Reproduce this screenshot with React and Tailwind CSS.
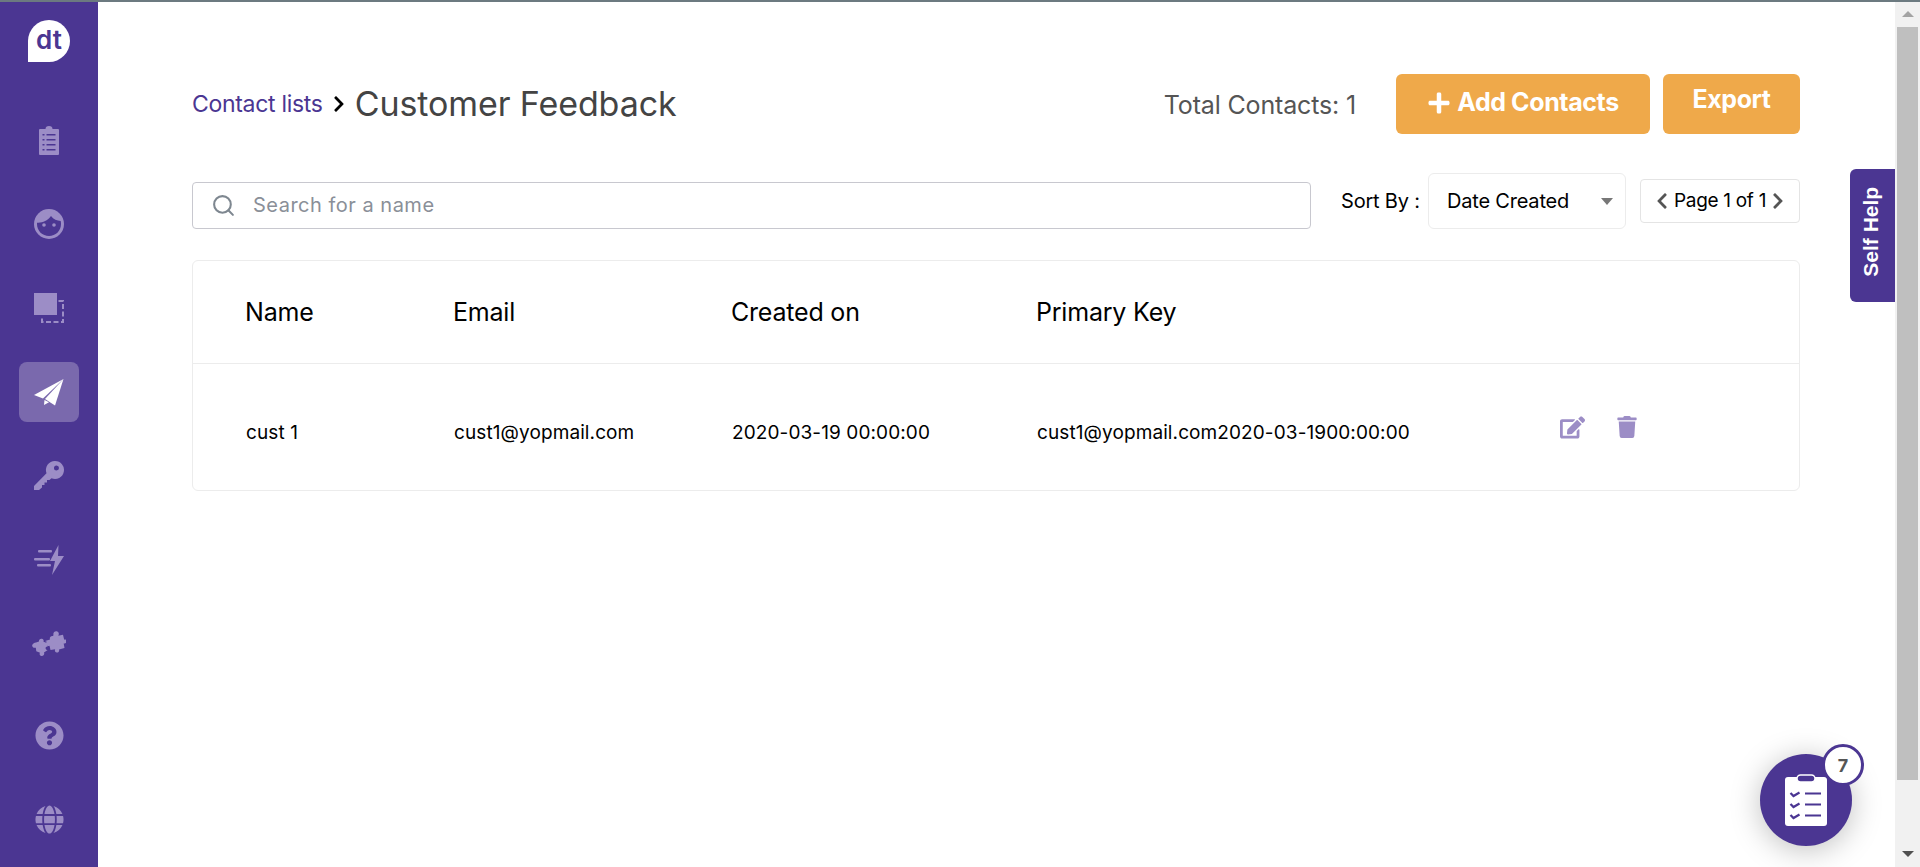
import React from 'react';
import { Search } from 'lucide-react';
import { FaQuestionCircle, FaGlobe, FaEdit, FaTrash, FaPlus, FaChevronLeft, FaChevronRight } from 'react-icons/fa';

const ClipboardIcon = () => (
  <svg width="20" height="29" viewBox="0 0 20 29">
    <path d="M1 3h5.500a3.500 3 0 0 1 7 0H19a1 1 0 0 1 1 1v24a1 1 0 0 1-1 1H1a1 1 0 0 1-1-1V4a1 1 0 0 1 1-1z" fill="currentColor" />
    <g fill="#4b3692">
      <rect x="3.500" y="8" width="2" height="1.500" />
      <rect x="7.500" y="8" width="9" height="1.500" />
      <rect x="3.500" y="13" width="2" height="1.500" />
      <rect x="7.500" y="13" width="9" height="1.500" />
      <rect x="3.500" y="18" width="2" height="1.500" />
      <rect x="7.500" y="18" width="9" height="1.500" />
      <rect x="3.500" y="23" width="2" height="1.500" />
      <rect x="7.500" y="23" width="9" height="1.500" />
    </g>
  </svg>
);

const FaceIcon = () => (
  <svg width="30" height="30" viewBox="0 0 30 30">
    <circle cx="15" cy="15" r="15" fill="currentColor" />
    <path d="M3 15c0 7 5.500 12 12 12s12-5 12-12c0-1-.1-2-.3-3-3.700-.2-7.200-1.700-9.700-5-2 3-6 6-11 6.500-1 .2-2 .3-3 .3z" fill="#4b3692" />
    <circle cx="10" cy="16" r="1.800" fill="currentColor" />
    <circle cx="20" cy="16" r="1.800" fill="currentColor" />
  </svg>
);

const CopyIcon = () => (
  <svg width="30" height="30" viewBox="0 0 30 30">
    <rect x="0" y="0" width="23" height="22" fill="currentColor" />
    <path d="M24.500 8H29v21H8v-4" fill="none" stroke="currentColor" strokeWidth="2" strokeDasharray="5 2.500" />
  </svg>
);

const PlaneIcon = () => (
  <svg width="30" height="27" viewBox="0 0 30 27">
    <path d="M29.500 0L0 16l9 3.500z" fill="#fff" />
    <path d="M29.500 0L11 20l10 6.500z" fill="#fff" />
    <path d="M10.500 21l-.5 5 5-2.800z" fill="#fff" />
  </svg>
);

const KeyIcon = () => (
  <svg width="30" height="30" viewBox="0 0 30 30">
    <path fillRule="evenodd" d="M21 0a9 9 0 1 1-3.500 17.300l-2 1.700h-2.500v2.500h-2.500V24H8v2.500L5 29H0v-4L12.500 12.200A9 9 0 0 1 21 0zm1.500 4.500a2.500 2.500 0 1 0 0 5 2.500 2.500 0 0 0 0-5z" fill="currentColor" />
  </svg>
);

const BoltIcon = () => (
  <svg width="30" height="30" viewBox="0 0 30 30">
    <path d="M24.500 0L16 16h5l-3 14 12-19h-6z" fill="currentColor" />
    <rect x="4" y="5" width="14" height="2.500" rx="1" fill="currentColor" />
    <rect x="0" y="13" width="16" height="2.500" rx="1" fill="currentColor" />
    <rect x="3" y="19" width="14" height="2.500" rx="1" fill="currentColor" />
  </svg>
);

const PuzzleIcon = () => (
  <svg width="34" height="27" viewBox="0 0 34 27">
    <path d="M13 10l5-1.500c-.8-2.500 1-4 3-3.500l.5-1c-.8-2.500 1.500-4.500 3.800-3.500 2 .9 1.700 3 1 4.300l4.700-1 1.200 5c1.500-.8 2.800.5 2.500 2-.3 1.700-2 2-3 1.600l.8 4.600-5.500 1.500c.6 1.800-.7 3.200-2.300 3-1.700-.3-2.200-2-1.500-3.300l-4.700.8-1-4.300c-1.700.8-3.500-.2-3.500-1.900 0-1.500 1.500-2.300 0-2.300z" fill="currentColor" />
    <path d="M4 11.500l3-1c-.3-1.800 1-3.200 2.800-2.800 1.700.3 2.200 2 1.700 3l3.500 1.300.7 3.500c-1.500-.3-2.500 1-2 2.300.4 1 1.200 1.300 2 1.300l-3.700 2.400c.8 1.800-.6 3.800-2.500 3.500-1.900-.3-2.300-2.200-1.500-3.300l-3.700-1.400-.5-3.600C2.500 17 .6 16.800.2 15c-.4-1.900 2-3.500 3.800-3.500z" fill="currentColor" />
  </svg>
);

const FloatingClipboard = () => (
  <svg width="42" height="52" viewBox="0 0 42 52">
    <rect x="0" y="3" width="42" height="49" rx="3" fill="#fff" />
    <rect x="12" y="1" width="18" height="7" rx="3.500" fill="#4b3692" stroke="#fff" strokeWidth="1.500" />
    <g fill="none" stroke="#4b3692" strokeWidth="2.200">
      <path d="M5.500 19l3 3 6-3.500" />
      <path d="M5.500 30l3 3 6-3.500" />
      <path d="M5.500 41l3 3 6-3.500" />
      <path d="M20 19.500h16M20 30.500h16M20 41.500h16" />
    </g>
  </svg>
);

const NavItem = ({ active, className = '', children }) => (
  <div className={`flex h-[60px] w-[60px] items-center justify-center rounded-lg text-[#9c8dc6] ${active ? 'bg-[#7a69ad]' : ''} ${className}`}>
    {children}
  </div>
);

export default function App() {
  return (
    <div className="relative flex h-screen flex-col overflow-hidden bg-white font-['Inter',sans-serif]">
      <div className="h-[2px] bg-[#6c7a80]" />
      <div className="flex min-h-0 flex-1">
        <aside className="flex w-[98px] flex-col items-center bg-[#4b3692]">
          <div className="mt-[18px] mb-[48px] flex h-[42px] w-[42px] items-center justify-center rounded-t-full rounded-br-full bg-white pb-[2px] text-[26px] font-semibold leading-none text-[#4b3692]">
            dt
          </div>
          <div className="flex flex-col gap-[24px]">
            <NavItem><ClipboardIcon /></NavItem>
            <NavItem><FaceIcon /></NavItem>
            <NavItem><CopyIcon /></NavItem>
            <NavItem active><PlaneIcon /></NavItem>
            <NavItem><KeyIcon /></NavItem>
            <NavItem><BoltIcon /></NavItem>
            <NavItem><PuzzleIcon /></NavItem>
            <NavItem className="mt-[7px]"><FaQuestionCircle size={29} /></NavItem>
            <NavItem><FaGlobe size={29} /></NavItem>
          </div>
        </aside>

        <main className="min-w-0 flex-1 pt-[72px] pr-[95px] pl-[94px]">
          <div className="flex h-[60px] items-center justify-between">
            <div className="flex items-center">
              <span className="text-[23px] tracking-[-0.3px] text-[#4b3692]">Contact lists</span>
              <FaChevronRight className="mx-[7px] text-[18px] text-black" />
              <h1 className="pb-[2px] text-[34px] tracking-[-0.1px] text-[#444444]">Customer Feedback</h1>
            </div>
            <div className="flex items-center">
              <span className="mr-[40px] pt-[3px] text-[25px] tracking-[-0.15px] text-[#555555]">Total Contacts: 1</span>
              <button className="mr-[13px] flex h-[60px] w-[254px] items-center justify-center gap-[6px] rounded-md bg-[#efa94a] pb-[3px] text-[25px] font-bold tracking-[-0.4px] text-white">
                <FaPlus size={24} />
                Add Contacts
              </button>
              <button className="flex h-[60px] w-[137px] justify-center rounded-md bg-[#efa94a] pt-[7px] text-[25px] font-bold tracking-[-0.4px] text-white">
                Export
              </button>
            </div>
          </div>

          <div className="mt-[39px] flex h-[56px] items-center">
            <div className="mt-[8px] flex h-[47px] w-[1119px] items-center rounded-[4px] border border-[#c8c8cf] pl-[18px]">
              <Search size={25} strokeWidth={2} className="text-[#7e8790]" />
              <span className="ml-[17px] text-[20px] tracking-[0.5px] text-[#8a8f98]">Search for a name</span>
            </div>
            <span className="ml-[30px] w-[87px] text-[20px] tracking-[-0.2px] text-black">Sort By :</span>
            <div className="flex h-[56px] w-[198px] items-center justify-between rounded-md border border-[#ececec] pr-[12px] pl-[18px]">
              <span className="text-[20px] tracking-[-0.2px] text-black">Date Created</span>
              <span className="h-0 w-0 border-x-[6px] border-t-[7px] border-x-transparent border-t-[#777777]" />
            </div>
            <div className="ml-[14px] flex h-[44px] w-[160px] items-center justify-center gap-[3px] rounded-[4px] border border-[#e4e4e4] text-[19px] tracking-[-0.3px] text-black">
              <FaChevronLeft size={18} className="text-[#555555]" />
              <span>Page 1 of 1</span>
              <FaChevronRight size={18} className="text-[#555555]" />
            </div>
          </div>

          <div className="mt-[31px] h-[231px] rounded-md border border-[#ececec]">
            <div className="grid h-[103px] grid-cols-[208px_278px_305px_1fr] items-center border-b border-[#ececec] pt-[2px] pl-[52px] text-[25px] tracking-[-0.2px] text-black">
              <span>Name</span>
              <span>Email</span>
              <span>Created on</span>
              <span>Primary Key</span>
            </div>
            <div className="grid h-[126px] grid-cols-[208px_278px_305px_523px_1fr] items-center pt-[12px] pl-[53px] text-[19px] tracking-[0.1px] text-black">
              <span>cust 1</span>
              <span>cust1@yopmail.com</span>
              <span>2020-03-19 00:00:00</span>
              <span>cust1@yopmail.com2020-03-1900:00:00</span>
              <div className="-mt-[12px] flex items-center gap-[31px] text-[#9c8dc6]">
                <FaEdit size={25} />
                <FaTrash size={22} />
              </div>
            </div>
          </div>
        </main>

        <div className="flex w-[25px] flex-col items-center bg-[#f1f1f1]">
          <div className="mt-[9px] h-0 w-0 border-x-[6px] border-b-[6px] border-x-transparent border-b-[#a3a3a3]" />
          <div className="mt-[10px] h-[753px] w-[21px] bg-[#bfbfbf]" />
          <div className="mt-[71px] h-0 w-0 border-x-[6px] border-t-[6px] border-x-transparent border-t-[#505050]" />
        </div>
      </div>

      <div className="absolute top-[169px] right-[25px] flex h-[133px] w-[45px] items-center justify-center rounded-l-md bg-[#4b3692] pr-[3px] pb-[8px]">
        <span className="-rotate-90 whitespace-nowrap font-['Liberation_Sans',sans-serif] text-[21px] font-bold text-white">Self Help</span>
      </div>

      <div className="absolute top-[754px] left-[1760px] flex h-[92px] w-[92px] items-center justify-center rounded-full bg-[#4b3692] shadow-[0_4px_30px_rgba(0,0,0,0.25)]">
        <FloatingClipboard />
        <div className="absolute -top-[10px] -right-[12px] flex h-[42px] w-[42px] items-center justify-center rounded-full border-[3px] border-[#4b3692] bg-white text-[18px] font-bold text-[#555555]">
          7
        </div>
      </div>
    </div>
  );
}
